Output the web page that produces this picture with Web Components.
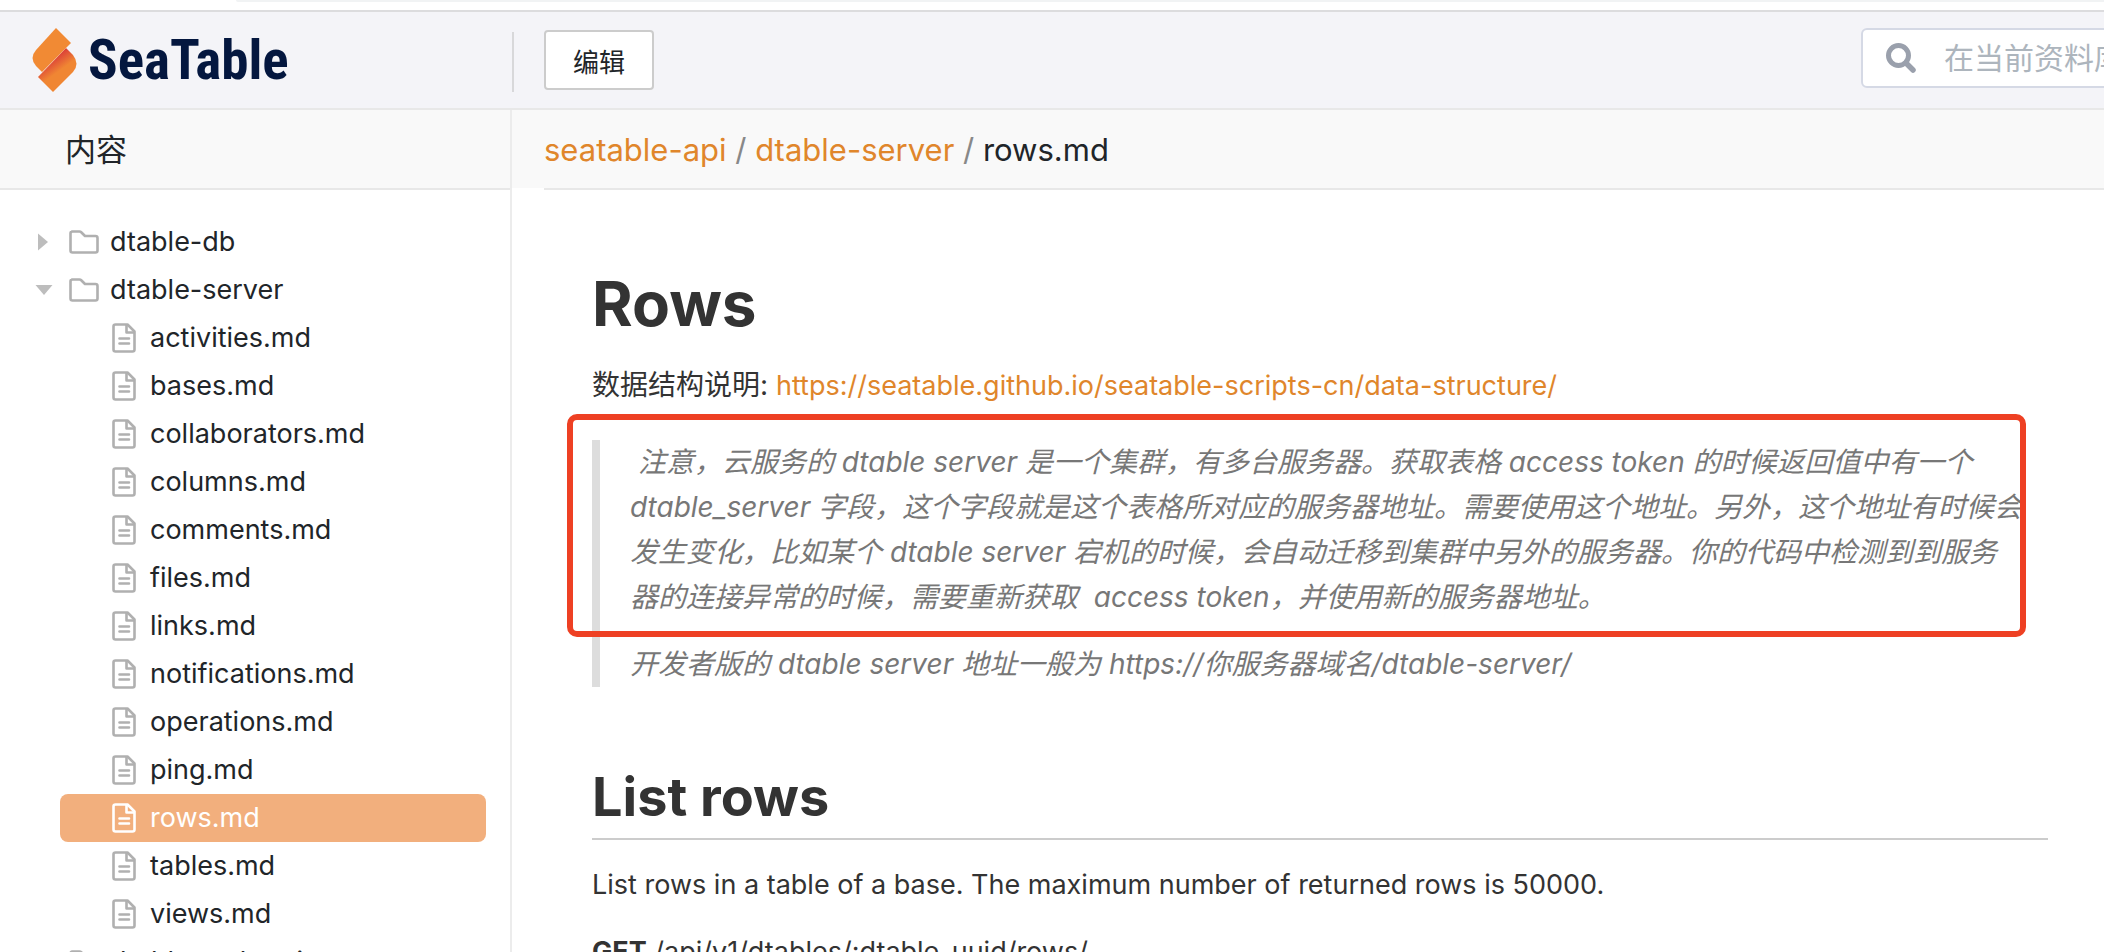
<!DOCTYPE html>
<html lang="zh-CN">
  <head>
    <meta charset="UTF-8" />
    <meta name="viewport" content="width=device-width, initial-scale=1.0" />
    <title>rows.md</title>
    <style>
      body {
        margin: 0;
        height: 100vh;
        overflow: hidden;
        background: #fff;
        color: #212529;
        font-family: Inter, "Noto Sans CJK SC", sans-serif;
        font-size: 28px;
      }
    </style>
  </head>
  <body>
    <wiki-page></wiki-page>

    <script>
      const define = (name, html) => {
        customElements.define(
          name,
          class extends HTMLElement {
            constructor() {
              super();
              this.attachShadow({ mode: "open" }).innerHTML = html;
            }
          }
        );
      };

      define(
        "sea-logo",
        `
        <style>
          :host { display: block; }
          a {
            display: flex;
            align-items: center;
            gap: 10px;
            color: #04173f;
            text-decoration: none;
            font: bold 55px/64px "Roboto Condensed", Roboto, sans-serif;
          }
          svg { display: block; }
        </style>
        <a href="#">
          <svg width="46" height="64" viewBox="0 0 46 64" aria-hidden="true">
            <defs>
              <linearGradient id="fold" gradientUnits="userSpaceOnUse" x1="26" y1="27" x2="34" y2="38">
                <stop offset="0" stop-color="#dc4238" />
                <stop offset="1" stop-color="#f08633" />
              </linearGradient>
            </defs>
            <path d="M34 20l7 7q7 9 0 17L21 64 6 49z" fill="url(#fold)" />
            <path d="M24 0l15 15L10 44l-6-6q-7-8 0-16z" fill="#f18a34" />
          </svg>
          <span>SeaTable</span>
        </a>
      `
      );

      define(
        "search-box",
        `
        <style>
          :host { display: block; }
          label {
            display: flex;
            align-items: center;
            box-sizing: border-box;
            height: 60px;
            padding-left: 23px;
            gap: 28px;
            border: 2px solid #d5d9e5;
            border-radius: 6px;
            background: #fff;
          }
          svg { flex: none; }
          input {
            width: 420px;
            padding: 0;
            border: 0;
            outline: 0;
            background: none;
            font: inherit;
            font-size: 30px;
          }
          input::placeholder { color: #adb5bd; opacity: 1; }
        </style>
        <label>
          <svg width="30" height="30" viewBox="0 0 30 30" fill="none" stroke="#9aa0ac" aria-hidden="true">
            <circle cx="12.500" cy="12.500" r="10" stroke-width="5" />
            <path d="M20 20l7 7" stroke-width="5.500" stroke-linecap="round" />
          </svg>
          <input type="text" placeholder="在当前资料库搜索" aria-label="在当前资料库搜索" />
        </label>
      `
      );

      define(
        "top-bar",
        `
        <style>
          :host { display: block; }
          .edge {
            height: 10px;
            border-bottom: 2px solid #dcdcde;
            background: #fff;
          }
          .edge::before {
            content: "";
            display: block;
            height: 2px;
            margin-left: 236px;
            border-bottom-left-radius: 2px;
            background: #f1f3f4;
          }
          header {
            display: flex;
            align-items: center;
            height: 96px;
            overflow: hidden;
            border-bottom: 2px solid #e8e8e8;
            background: #f4f4f8;
          }
          sea-logo {
            flex: none;
            box-sizing: border-box;
            width: 512px;
            padding-left: 32px;
          }
          .divider {
            flex: none;
            width: 2px;
            height: 60px;
            margin-top: 4px;
            background: #d8d8da;
          }
          button {
            flex: none;
            height: 60px;
            margin-left: 30px;
            padding: 0 27px;
            border: 2px solid #ccc;
            border-radius: 4px;
            background: #fff;
            color: #212529;
            font: inherit;
            font-size: 26px;
          }
          search-box {
            flex: none;
            width: 500px;
            margin: 0 -257px 4px auto;
          }
        </style>
        <div class="edge"></div>
        <header>
          <sea-logo></sea-logo>
          <span class="divider"></span>
          <button type="button">编辑</button>
          <search-box></search-box>
        </header>
      `
      );

      const icons = {
        file: `
          <svg width="24" height="30" viewBox="0 0 24 30" fill="none" stroke="currentColor" stroke-width="2.600" stroke-linejoin="round" aria-hidden="true">
            <path d="M3.500 1.500h12l7 7v18q0 2-2 2h-17q-2 0-2-2v-23q0-2 2-2z" />
            <path d="M14.500 1.500v8h8" />
            <path d="M7.500 15.500h9.500M7.500 20.500h9.500" stroke-linecap="round" />
          </svg>`,
        folder: `
          <svg width="30" height="24" viewBox="0 0 30 24" fill="none" stroke="currentColor" stroke-width="2.600" stroke-linejoin="round" aria-hidden="true">
            <path d="M3 1.500h7.500q1 0 2 1l3.500 3.500h10.500q2 0 2 2v12.500q0 2-2 2H3.500q-2 0-2-2V3.500q0-2 2-2z" />
          </svg>`,
        closed: `
          <svg width="18" height="18" viewBox="0 0 18 18" aria-hidden="true">
            <path d="M3 0.500l10 8.500-10 8.500z" fill="#bdbdbd" />
          </svg>`,
        open: `
          <svg width="18" height="18" viewBox="0 0 18 18" aria-hidden="true">
            <path d="M0.500 4h17l-8.500 10z" fill="#bdbdbd" />
          </svg>`,
      };

      // <tree-item folder="open|closed"> or <tree-item selected>
      class TreeItem extends HTMLElement {
        connectedCallback() {
          const folder = this.getAttribute("folder");
          this.attachShadow({ mode: "open" }).innerHTML = `
            <style>
              :host { display: block; }
              a {
                display: flex;
                align-items: center;
                height: 48px;
                color: inherit;
                font-size: 27px;
                text-decoration: none;
              }
              .file { margin: 0 24px 0 60px; padding-left: 52px; gap: 14px; border-radius: 8px; }
              .folder { padding-left: 35px; gap: 11px; }
              .toggle { margin-right: 5px; }
              .icon, .toggle { display: flex; color: #b0b0b0; }
              .name { padding-bottom: 2px; }
              :host([selected]) a { background: #f2af7d; color: #fff; }
              :host([selected]) .icon { color: #fff; }
            </style>
            <a href="#" class="${folder ? "folder" : "file"}">
              ${folder ? `<span class="toggle">${icons[folder]}</span>` : ""}
              <span class="icon">${folder ? icons.folder : icons.file}</span>
              <span class="name"><slot></slot></span>
            </a>
          `;
        }
      }
      customElements.define("tree-item", TreeItem);

      define(
        "side-nav",
        `
        <style>
          :host { display: block; border-right: 2px solid #ececec; }
          h3 {
            margin: 0;
            padding: 2px 0 0 65px;
            border-bottom: 2px solid #e8e8e8;
            background: #f9f9f9;
            font-size: 31px;
            font-weight: 400;
            line-height: 76px;
          }
          nav { padding-top: 28px; }
        </style>
        <h3>内容</h3>
        <nav><slot></slot></nav>
      `
      );

      define(
        "path-bar",
        `
        <style>
          :host { display: block; padding-left: 32px; background: linear-gradient(#f9f9f9, #f9f9f9) 0 0 / 100% 78px no-repeat; }
          nav {
            padding-top: 2px;
            border-bottom: 2px solid #e8e8e8;
            font-size: 31px;
            line-height: 76px;
            white-space: pre;
          }
          a { color: #e0862b; text-decoration: none; }
          span { color: #888; }
        </style>
        <nav><a href="#">seatable-api</a><span> / </span><a href="#">dtable-server</a><span> / </span>rows.md</nav>
      `
      );

      define(
        "note-quote",
        `
        <style>
          :host { display: block; position: relative; }
          blockquote {
            margin: 0;
            padding: 0 26px 0 30px;
            border-left: 8px solid #ddd;
            color: #777;
            font-style: italic;
          }
          .frame {
            position: absolute;
            inset: -26px 22px 50px -25px;
            border: 6px solid #ee4023;
            border-radius: 10px;
            pointer-events: none;
          }
        </style>
        <blockquote><slot></slot></blockquote>
        <div class="frame"></div>
      `
      );

      define(
        "doc-article",
        `
        <style>
          :host { display: block; padding: 78px 56px 0 80px; color: #333; line-height: 45px; }
          h1, h2 { margin: 0; font-weight: 700; }
          h1 { font-size: 62px; line-height: 72px; }
          h2 {
            margin: 74px 0 22px;
            padding-bottom: 5px;
            border-bottom: 2px solid #ccc;
            font-size: 54px;
            line-height: 72px;
          }
          p { margin: 0 0 22px; }
          note-quote { margin-top: 32px; }
          note-quote p { white-space: pre; }
          note-quote p:last-child { margin: 0; }
          h1 + p { margin: 23px 0 0; }
          a { color: #e0862b; text-decoration: none; }
          a, h2 ~ p { font-size: 27px; }
        </style>
        <h1>Rows</h1>
        <p>数据结构说明: <a href="#">https://seatable.github.io/seatable-scripts-cn/data-structure/</a></p>
        <note-quote>
          <p> 注意，云服务的 dtable server 是一个集群，有多台服务器。获取表格 access token 的时候返回值中有一个<br>dtable_server 字段，这个字段就是这个表格所对应的服务器地址。需要使用这个地址。另外，这个地址有时候会<br>发生变化，比如某个 dtable server 宕机的时候，会自动迁移到集群中另外的服务器。你的代码中检测到到服务<br>器的连接异常的时候，需要重新获取  access token，并使用新的服务器地址。</p>
          <p>开发者版的 dtable server 地址一般为 https://你服务器域名/dtable-server/</p>
        </note-quote>
        <h2>List rows</h2>
        <p>List rows in a table of a base. The maximum number of returned rows is 50000.</p>
        <p><strong>GET</strong> /api/v1/dtables/:dtable_uuid/rows/</p>
      `
      );

      define(
        "wiki-page",
        `
        <style>
          :host { display: flex; flex-direction: column; height: 100%; }
          .columns { flex: 1; min-height: 0; display: grid; grid-template-columns: 512px 1fr; }
          side-nav, main { overflow: hidden; }
        </style>
        <top-bar></top-bar>
        <div class="columns">
          <side-nav>
            <tree-item folder="closed">dtable-db</tree-item>
            <tree-item folder="open">dtable-server</tree-item>
            <tree-item>activities.md</tree-item>
            <tree-item>bases.md</tree-item>
            <tree-item>collaborators.md</tree-item>
            <tree-item>columns.md</tree-item>
            <tree-item>comments.md</tree-item>
            <tree-item>files.md</tree-item>
            <tree-item>links.md</tree-item>
            <tree-item>notifications.md</tree-item>
            <tree-item>operations.md</tree-item>
            <tree-item>ping.md</tree-item>
            <tree-item selected>rows.md</tree-item>
            <tree-item>tables.md</tree-item>
            <tree-item>views.md</tree-item>
            <tree-item folder="closed">dtable-webscript</tree-item>
          </side-nav>
          <main>
            <path-bar></path-bar>
            <doc-article></doc-article>
          </main>
        </div>
      `
      );
    </script>
  </body>
</html>
